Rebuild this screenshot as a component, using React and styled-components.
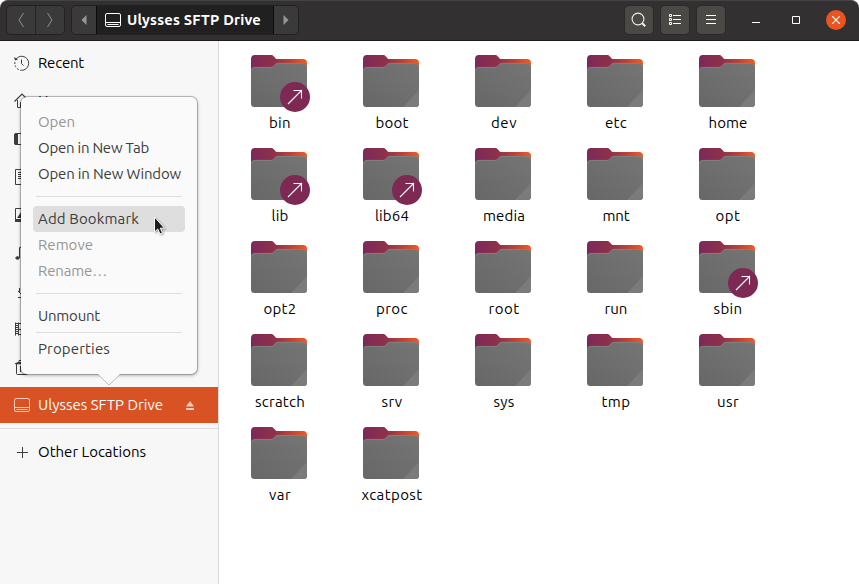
import React, { useLayoutEffect, useRef, useState } from "react";
import styled, { createGlobalStyle, css } from "styled-components";

const GlobalStyle = createGlobalStyle`
  * { box-sizing: border-box; }
  body { margin: 0; background: #fff; overflow: hidden; font-family: Ubuntu, "Noto Sans", sans-serif; font-size: 15px; }
`;

const Window = styled.div`
  position: relative;
  width: 859px;
  height: 584px;
  display: flex;
  flex-direction: column;
  color: #000;
`;

const HeaderBar = styled.header`
  height: 41px;
  flex: none;
  display: flex;
  align-items: flex-start;
  padding: 4px 13px 0 6px;
  border-radius: 8px 8px 0 0;
  background: #323031;
  border-top: 1px solid #454344;
  border-bottom: 1px solid #1c1a1b;
`;

const ButtonGroup = styled.div`
  display: flex;
  height: 30px;
  margin-right: 6px;
  border: 1px solid #232122;
  border-radius: 5px;
  background: #3b3a3a;
  overflow: hidden;
`;

const GroupButton = styled.button`
  width: ${(p) => p.$width}px;
  border: 0;
  padding: 0;
  display: grid;
  place-items: center;
  background: transparent;
  & + & { border-left: 1px solid #232122; }
`;

const PathSegment = styled.div`
  width: 178px;
  display: flex;
  align-items: center;
  gap: 6px;
  padding-left: 8px;
  background: #212020;
  border: 1px solid #0b0b0b;
  border-width: 0 1px;
  color: #fff;
  font-size: 14.67px;
  font-weight: 700;
`;

const Spacer = styled.div`flex: 1;`;

const ToolButton = styled.button`
  width: 30px;
  height: 30px;
  margin-right: 6px;
  padding: 0;
  display: grid;
  place-items: center;
  border: 1px solid #2a2829;
  border-radius: 5px;
  background: #4a4946;
`;

const WindowControls = styled.div`
  display: flex;
  align-items: center;
  height: 30px;
  margin-left: 14px;
  gap: 20px;
`;

const WindowControl = styled.button`
  width: 20px;
  height: 20px;
  padding: 0;
  border: 0;
  border-radius: 50%;
  display: grid;
  place-items: center;
  background: ${(p) => (p.$close ? "#e95420" : "transparent")};
`;

const Body = styled.div`
  flex: 1;
  display: flex;
`;

const Sidebar = styled.aside`
  width: 219px;
  padding-top: 4px;
  background: #f7f7f7;
  border-right: 1px solid #d9d9d9;
`;

const Place = styled.div`
  height: 36px;
  margin-bottom: 2px;
  display: flex;
  align-items: center;
  gap: 8px;
  padding-left: 14px;
  color: ${(p) => (p.$active ? "#fff" : "#000")};
  background: ${(p) => (p.$active ? "#d95223" : "transparent")};
  & > svg { flex: none; color: ${(p) => (p.$active ? "#f3c9b8" : "#3d3d3d")}; }
`;

const Eject = styled.svg`margin-left: 15px;`;

const PlaceRule = styled.div`
  height: 1px;
  margin: 5px 0;
  background: #dcdcdc;
`;

const Files = styled.main`
  flex: 1;
  display: grid;
  grid-template-columns: repeat(5, 112px);
  grid-auto-rows: 93px;
  padding: 14px 0 0 4px;
  background: #fff;
`;

const FileCell = styled.figure`
  margin: 0;
  display: flex;
  flex-direction: column;
  align-items: center;
`;

const FolderArt = styled.div`
  position: relative;
  width: 56px;
  height: 58px;
`;

const LinkBadge = styled.svg`
  position: absolute;
  left: 29px;
  top: 27px;
`;

const Caption = styled.figcaption`
  height: 20px;
  display: flex;
  align-items: center;
  padding-left: 2px;
`;

const Popover = styled.div`
  position: absolute;
  left: 20px;
  top: 96px;
  width: 178px;
  height: 279px;
  padding: 12px;
  border: 1px solid rgba(0, 0, 0, 0.2);
  border-radius: 7px;
  background: #fafafa;
  background-clip: padding-box;
  box-shadow: 0 1px 3px rgba(0, 0, 0, 0.24);
`;

const MenuItem = styled.div`
  height: 26px;
  display: flex;
  align-items: center;
  padding-left: 5px;
  border-radius: 4px;
  color: ${(p) => (p.$disabled ? "#969696" : "#3d3d3d")};
  ${(p) => p.$hover && css`background: #dedede;`}
`;

const MenuRule = styled.div`
  height: 1px;
  margin: ${(p) => p.$gap}px 3px;
  background: #dedede;
`;

const Tail = styled.svg`
  position: absolute;
  left: 76px;
  top: 276px;
`;

const Cursor = styled.svg`
  position: absolute;
  left: 151px;
  top: 215px;
  filter: drop-shadow(1px 1px 1px rgba(0, 0, 0, 0.35));
`;

const Text = styled.span`
  display: inline-block;
  white-space: nowrap;
  line-height: 20px;
`;

/* Tracks a label so that it spans the given advance width. */
function Label({ text, width }) {
  const ref = useRef(null);
  const [tracking, setTracking] = useState(0);
  useLayoutEffect(() => {
    const natural = ref.current.getBoundingClientRect().width;
    setTracking((width - natural) / text.length);
  }, [text, width]);
  return <Text ref={ref} style={{ letterSpacing: tracking }}>{text}</Text>;
}

const Drive = () => (
  <svg width="16" height="16" viewBox="0 0 16 16" fill="none" stroke="currentColor">
    <rect x=".5" y="1.5" width="15" height="13" rx="1.5" />
    <path d="M1 10.5h14M2.5 12.5h11" />
  </svg>
);

const icons = {
  recent: <><path d="M2 4.2A7 7 0 1 1 7.5 15.3" /><path d="M.9 7A7 7 0 0 0 7.5 15.3" strokeDasharray="2 1.5" /><path d="M7.5 4.5v4l2 2" /><path d="M0 2l1 3.5 3-1z" fill="currentColor" stroke="none" /></>,
  home: <><path d="M.5 8.5 8 1l7.5 7.5" strokeWidth="1.2" /><path d="M3.5 7v7.5h3v-5h3v5h3V7" /></>,
  desktop: <><rect x=".5" y="2.5" width="15" height="11" rx="1.5" /><path d="M2 2h2v12H2a1.5 1.5 0 0 1-1.5-1.5v-9A1.5 1.5 0 0 1 2 2z" fill="currentColor" stroke="none" /><path d="M4 2.5h4M4 13.5h4" /></>,
  documents: <><path d="M1.5.5h12v15h-12z" /><path d="M4 3.5h7M4 5.5h7M4 7.5h7M4 9.5h4" /></>,
  pictures: <><path d="M1.5 1.5h13v13h-13z" /><path d="M1 12h14v3H1z" fill="currentColor" stroke="none" /><path d="M3 11l4-6 3 6z" fill="currentColor" stroke="none" /></>,
  music: <><path d="M5.5 13V2.5l8-2V11" /><ellipse cx="3.5" cy="13" rx="1.7" ry="1.3" fill="currentColor" /><ellipse cx="11.5" cy="11" rx="1.7" ry="1.3" fill="currentColor" /></>,
  downloads: <><path d="M8 0v11M4 8l4 4 4-4" /><path d="M5.5 5v4" /><path d="M4 14.5h9" /></>,
  videos: <><path d="M1.5 1.5v13M4.5 1.5v13M11.5 1.5v13M14.5 1.5v13M4.5 2.5h7M4.5 8.5h7M4.5 13.5h7" /><path d="M3 2v12M13 2v12" strokeWidth="2" strokeDasharray="1 1" /></>,
  trash: <><path d="M2.5 4.5v10a1 1 0 0 0 1 1h9a1 1 0 0 0 1-1v-10M5 4V1.5h6V4M6.5 7v6M9.5 7v6" /><path d="M1 4.2 4 3h8l3 1.2v1H1z" fill="currentColor" stroke="none" /></>,
  plus: <path d="M8.5 3v11M3 8.5h11" />,
};

const Glyph = ({ name }) => (
  <svg width="16" height="16" viewBox="0 0 16 16" fill="none" stroke="currentColor">{icons[name]}</svg>
);

const places = [
  ["recent", "Recent", 46], ["home", "Home", 40], ["desktop"], ["documents"],
  ["pictures"], ["music"], ["downloads"], ["videos"], ["trash"],
];

const folders = [
  ["bin", 22, true], ["boot", 33], ["dev", 26], ["etc", 22], ["home", 39],
  ["lib", 17, true], ["lib64", 34, true], ["media", 42], ["mnt", 27], ["opt", 25],
  ["opt2", 33], ["proc", 32], ["root", 31], ["run", 23], ["sbin", 29, true],
  ["scratch", 50], ["srv", 21], ["sys", 21], ["tmp", 29], ["usr", 22],
  ["var", 22], ["xcatpost", 61],
];

const Folder = () => (
  <svg width="58" height="54" viewBox="0 0 58 54">
    <defs>
      <linearGradient id="tab" x1="0" y1="0" x2="1" y2="0">
        <stop offset="0" stopColor="#7c2958" /><stop offset=".42" stopColor="#90304b" />
        <stop offset=".7" stopColor="#bd4235" /><stop offset="1" stopColor="#f25a22" />
      </linearGradient>
      <linearGradient id="face" x1="0" y1="1" x2="1" y2="0">
        <stop offset="0" stopColor="#676767" /><stop offset="1" stopColor="#757575" />
      </linearGradient>
    </defs>
    <path d="M0 4a4 4 0 0 1 4-4h16c1.2 0 2 .4 2.7 1.2l2 2.3c.3.3.6.5 1 .5H52a4 4 0 0 1 4 4v8H0z" fill="url(#tab)" />
    <path d="M0 16a4 4 0 0 1 4-4h16.5c.8 0 1.4-.3 1.9-.8l2.2-2.4c.5-.5 1-.8 1.8-.8H52a4 4 0 0 1 4 4v36.5a3.5 3.5 0 0 1-3.5 3.5h-49A3.5 3.5 0 0 1 0 48.5z" fill="url(#face)" />
    <path d="M.5 15.5A3.5 3.5 0 0 1 4 12.4h16.5c.8 0 1.4-.3 1.9-.8l2.2-2.4c.5-.5 1-.8 1.8-.8H52a3.5 3.5 0 0 1 3.5 3" fill="none" stroke="#888" strokeWidth=".7" />
    <path d="M56 35v13.5a3.5 3.5 0 0 1-3.5 3.5H40z" fill="#7b7b7b" />
  </svg>
);

export default function App() {
  return (
    <Window>
      <GlobalStyle />
      <HeaderBar>
        <ButtonGroup>
          <GroupButton $width={28}><svg width="8" height="16" fill="none" stroke="#929090"><path d="M6.5 1 2 8l4.5 7" /></svg></GroupButton>
          <GroupButton $width={29}><svg width="8" height="16" fill="none" stroke="#929090"><path d="m1.5 1 4.5 7-4.5 7" /></svg></GroupButton>
        </ButtonGroup>
        <ButtonGroup>
          <GroupButton $width={24}><svg width="6" height="10" fill="#989796"><path d="M5.5 0v10L.5 5z" /></svg></GroupButton>
          <PathSegment><Drive /><Label text="Ulysses SFTP Drive" width={134} /></PathSegment>
          <GroupButton $width={24}><svg width="6" height="10" fill="#989796"><path d="M.5 0v10l5-5z" /></svg></GroupButton>
        </ButtonGroup>
        <Spacer />
        <ToolButton><svg width="16" height="16" fill="none" stroke="#eee"><circle cx="7" cy="7" r="5.9" strokeWidth="1.1" /><path d="m11 11 3.2 3.2" strokeWidth="2" /></svg></ToolButton>
        <ToolButton><svg width="14" height="12" fill="none" stroke="#fff"><path d="M1.5.5h2v2h-2zM1.5 4.5h2v2h-2zM1.5 8.5h2v2h-2zM5 1.5h8M5 5.5h8M5 9.5h8" /></svg></ToolButton>
        <ToolButton><svg width="12" height="12" stroke="#fff"><path d="M1 1.5h10M1 5.5h10M1 9.5h10" /></svg></ToolButton>
        <WindowControls>
          <WindowControl><svg width="8" height="8" stroke="#fff"><path d="M0 6.5h8" /></svg></WindowControl>
          <WindowControl><svg width="8" height="8" fill="none" stroke="#fff"><path d="M.5.5h7v7h-7z" /></svg></WindowControl>
          <WindowControl $close><svg width="8" height="8" stroke="#fff" strokeWidth="1.2"><path d="m0 0 8 8M8 0 0 8" /></svg></WindowControl>
        </WindowControls>
      </HeaderBar>
      <Body>
        <Sidebar>
          {places.map(([icon, text, width]) => (
            <Place key={icon}><Glyph name={icon} />{text && <Label text={text} width={width} />}</Place>
          ))}
          <Place $active>
            <Drive /><Label text="Ulysses SFTP Drive" width={125} />
            <Eject width="8" height="9" fill="currentColor"><path d="M4 0 0 5.5h8zM0 7h8v2H0z" /></Eject>
          </Place>
          <PlaceRule />
          <Place><Glyph name="plus" /><Label text="Other Locations" width={108} /></Place>
        </Sidebar>
        <Files>
          {folders.map(([name, width, link]) => (
            <FileCell key={name}>
              <FolderArt>
                <Folder />
                {link && (
                  <LinkBadge width="30" height="30" fill="none">
                    <circle cx="15" cy="15" r="15" fill="#7d2953" />
                    <path d="M8 22 22 8M13.5 8.5h8v8" stroke="#fff" strokeWidth="1.1" />
                  </LinkBadge>
                )}
              </FolderArt>
              <Caption><Label text={name} width={width} /></Caption>
            </FileCell>
          ))}
        </Files>
      </Body>
      <Popover>
        <MenuItem $disabled><Label text="Open" width={37} /></MenuItem>
        <MenuItem><Label text="Open in New Tab" width={111} /></MenuItem>
        <MenuItem><Label text="Open in New Window" width={143} /></MenuItem>
        <MenuRule $gap={9} />
        <MenuItem $hover><Label text="Add Bookmark" width={101} /></MenuItem>
        <MenuItem $disabled><Label text="Remove" width={55} /></MenuItem>
        <MenuItem $disabled><Label text="Rename…" width={69} /></MenuItem>
        <MenuRule $gap={9} />
        <MenuItem><Label text="Unmount" width={62} /></MenuItem>
        <MenuRule $gap={3} />
        <MenuItem><Label text="Properties" width={72} /></MenuItem>
        <Tail width="24" height="13"><path d="M0 0h24v1h-1L12 11.5 1 1H0z" fill="#fafafa" /><path d="M1 1.5 12 12 23 1.5" fill="none" stroke="#bdbdbd" /></Tail>
      </Popover>
      <Cursor width="15" height="21"><path d="M3.5 2v15l3.3-3 2.2 5 2.5-1-2.2-4.8h4.2z" fill="#1c1c1c" stroke="#fff" /></Cursor>
    </Window>
  );
}
